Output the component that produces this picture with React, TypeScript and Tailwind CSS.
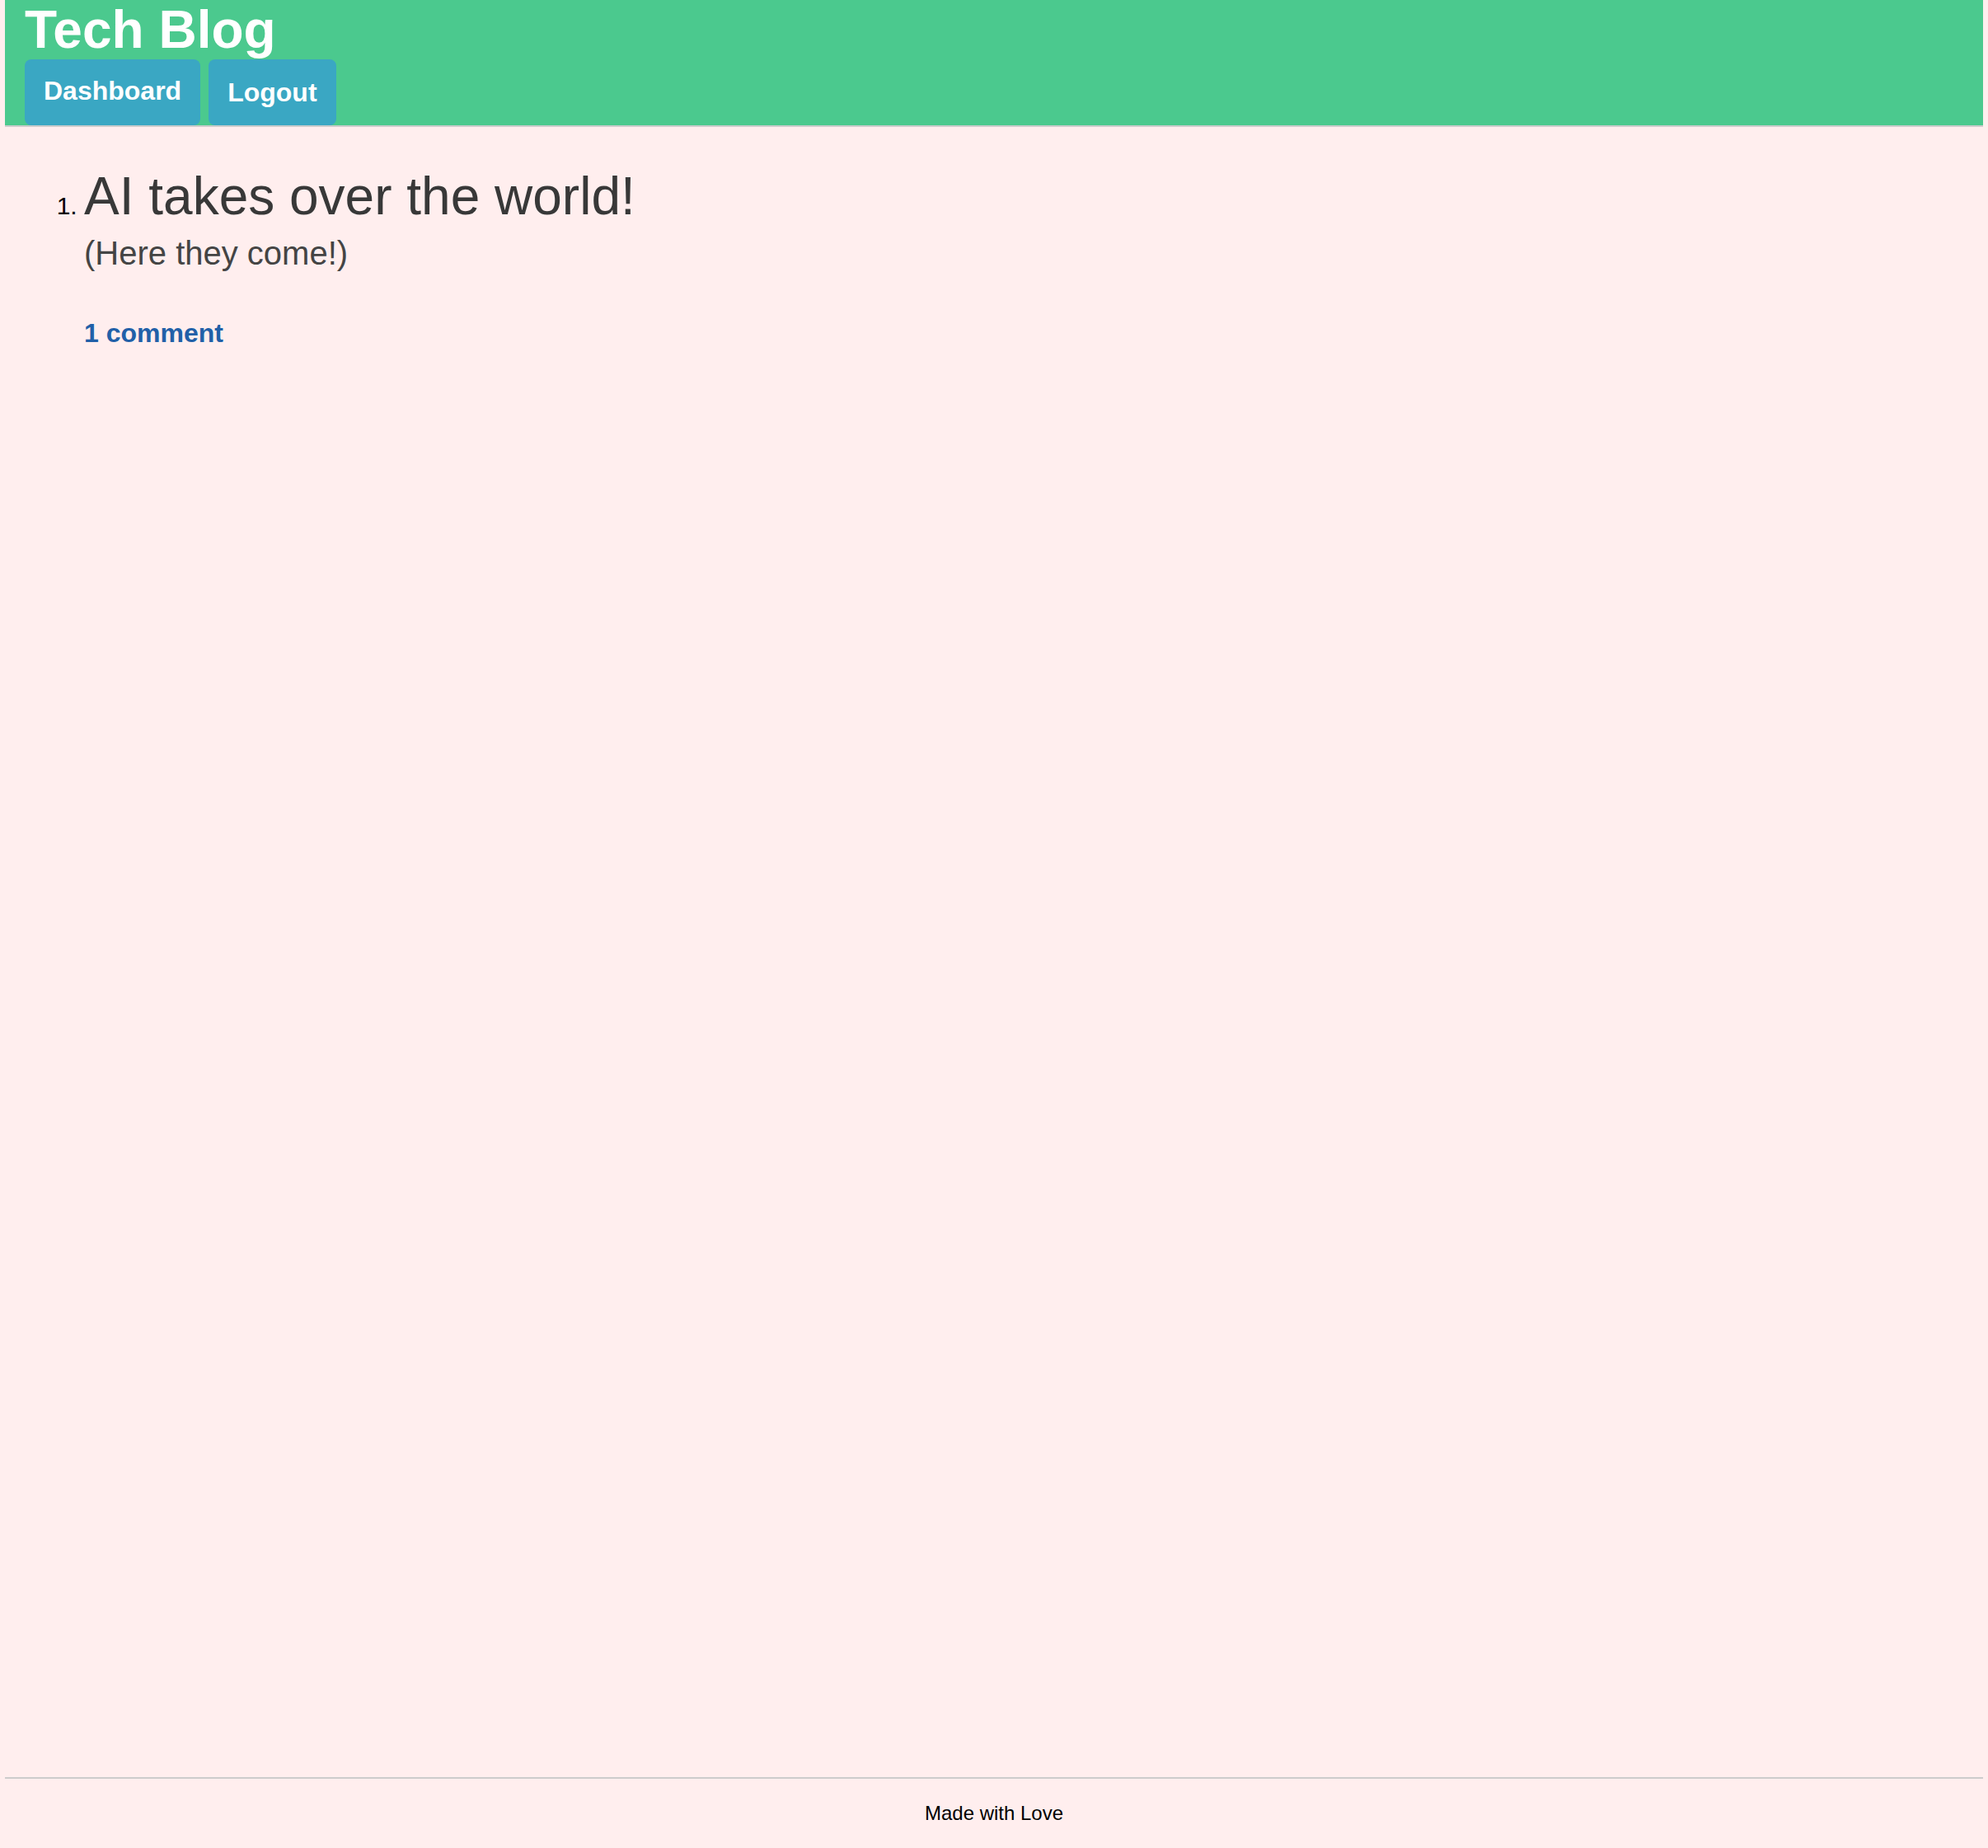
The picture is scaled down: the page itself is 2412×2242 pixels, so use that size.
export default function App() {
  return (
    <div className="flex min-h-screen flex-col bg-[#ffeeee] px-[6px] font-['Liberation_Sans',Arial,sans-serif]">
      <header className="border-b-2 border-[#cccccc] bg-[#4bc98e] px-6">
        <h1 className="text-[64px] font-bold leading-[72px] text-white">Tech Blog</h1>
        <nav className="flex gap-[10px]">
          <a className="rounded-lg bg-[#3aa7c3] px-[23px] pb-[24px] pt-[20px] text-[32px] font-bold leading-[36px] text-white">
            Dashboard
          </a>
          <button className="rounded-lg bg-[#3aa7c3] px-[23px] py-[22px] text-[32px] font-bold leading-[36px] text-white">
            Logout
          </button>
        </nav>
      </header>

      <main className="flex-1 pt-[48px]">
        <ol className="list-decimal pl-[96px] text-[30px] text-black">
          <li>
            <h2 className="text-[64px] leading-[73.6px] text-[#383838]">AI takes over the world!</h2>
            <p className="mt-[8px] text-[40px] leading-[46px] text-[#444444]">(Here they come!)</p>
            <a className="mt-[56px] block text-[32px] font-bold leading-[37px] text-[#2160a8]">1 comment</a>
          </li>
        </ol>
      </main>

      <footer className="border-t-2 border-[#cccccc] py-[28px] text-center text-[24px] leading-[28px] text-black">
        Made with Love
      </footer>
    </div>
  );
}
